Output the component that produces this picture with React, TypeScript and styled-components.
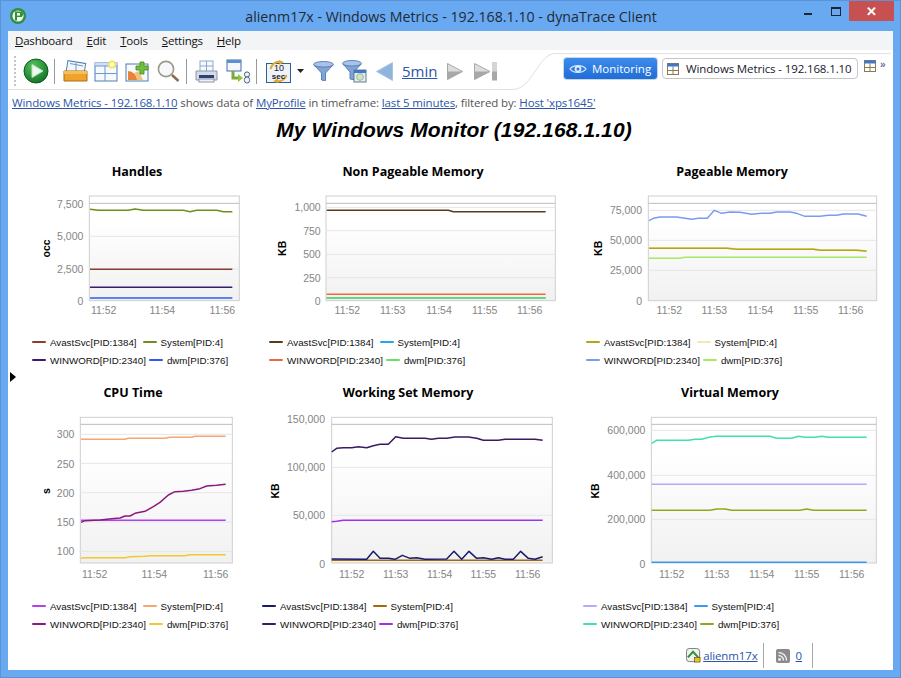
import React from "react";
import styled, { createGlobalStyle } from "styled-components";

const GlobalStyle = createGlobalStyle`
  html, body {
    margin: 0;
    padding: 0;
    background: #69a9f2;
  }
`;

const UI_FONT = `"Open Sans", "Noto Sans", sans-serif`;
const CHART_FONT = `"Liberation Sans", Arial, sans-serif`;

const Window = styled.div`
  position: relative;
  box-sizing: border-box;
  width: 901px;
  height: 678px;
  padding: 0 7px 7px;
  display: flex;
  flex-direction: column;
  background: #69a9f2;
  border: 1px solid #5b93d6;
  overflow: hidden;
  font-family: ${UI_FONT};
`;

const TitleBar = styled.div`
  height: 30px;
  flex: none;
  display: flex;
  align-items: center;
  margin: 0 -7px;
  padding-left: 8px;
`;

const AppIcon = styled.svg`
  flex: none;
  width: 18px;
  height: 18px;
  margin-top: -1px;
`;

const WindowTitle = styled.div`
  flex: 1;
  text-align: center;
  font-size: 14.2px;
  color: #202a36;
  margin-right: 25px;
`;

const WindowButtons = styled.div`
  position: absolute;
  top: 0;
  right: 6px;
  display: flex;
  align-items: flex-start;
`;

const MinButton = styled.div`
  width: 8px;
  height: 2px;
  background: #1d2630;
  margin: 12px 19px 0 0;
`;

const MaxButton = styled.div`
  box-sizing: border-box;
  width: 10px;
  height: 9px;
  border: 1px solid #1d2630;
  border-top-width: 2px;
  margin: 6px 8px 0 0;
`;

const CloseButton = styled.div`
  width: 45px;
  height: 20px;
  background: #c75050;
  color: #fff;
  display: flex;
  align-items: center;
  justify-content: center;
  font: bold 13px ${CHART_FONT};
`;

const Client = styled.div`
  flex: 1;
  display: flex;
  flex-direction: column;
  background: #fff;
  min-height: 0;
`;

const MenuBar = styled.div`
  height: 19px;
  flex: none;
  display: flex;
  align-items: center;
  gap: 14px;
  padding-left: 7px;
  background: #f3f4f6;
  font-size: 11.5px;
  letter-spacing: -0.2px;
  color: #111;
`;

const ToolRow = styled.div`
  height: 39px;
  flex: none;
  display: flex;
  border-top: 1px solid #fff;
`;

const ToolsLeft = styled.div`
  width: 500px;
  flex: none;
  box-sizing: border-box;
  display: flex;
  align-items: center;
  border-bottom: 1px solid #e3e3e3;
  padding: 2px 0 0 6px;
`;

const Grip = styled.div`
  width: 2px;
  height: 30px;
  border-left: 2px dotted #c4c4c4;
  margin-right: 7px;
  box-sizing: border-box;
`;

const ToolIcon = styled.svg<{ $gap?: number }>`
  flex: none;
  margin-right: ${(p) => p.$gap ?? 0}px;
`;

const ToolSep = styled.div<{ $left: number; $right: number }>`
  width: 1px;
  height: 25px;
  flex: none;
  background: #9a9a9a;
  margin: 0 ${(p) => p.$right}px 0 ${(p) => p.$left}px;
`;

const Range = styled.a`
  font-size: 15px;
  color: #2a55a8;
  text-decoration: underline;
  margin-right: 10px;
`;

const Curve = styled.svg`
  flex: none;
  width: 50px;
  height: 39px;
`;

const ToolsRight = styled.div`
  flex: 1;
  display: flex;
  align-items: flex-start;
  box-sizing: border-box;
  border-top: 1px solid #e3e3e3;
  margin: 2px 2px 0 0;
  padding: 4px 0 0 6px;
`;

const PerspectiveButton = styled.div`
  box-sizing: border-box;
  width: 93px;
  height: 21px;
  display: flex;
  align-items: center;
  gap: 5px;
  padding-left: 5px;
  border-radius: 3px;
  background: linear-gradient(#3d8bec, #1f6dd6);
  box-shadow: 0 0 0 1px #c9d6e6;
  color: #fff;
  font-size: 11.5px;
  white-space: nowrap;
`;

const DashTab = styled.div`
  box-sizing: border-box;
  width: 196px;
  height: 21px;
  margin-left: 5px;
  display: flex;
  align-items: center;
  gap: 7px;
  padding-left: 4px;
  border: 1px solid #c6c6c6;
  border-radius: 4px;
  color: #17202c;
  font-size: 11.5px;
  letter-spacing: -0.13px;
  white-space: nowrap;
`;

const MoreIcons = styled.div`
  display: flex;
  align-items: flex-start;
  gap: 4px;
  margin: 2px 0 0 6px;
`;

const Chevrons = styled.span`
  color: #6a6aa8;
  font: bold 10px/9px ${CHART_FONT};
`;

const TableIcon = styled.svg`
  flex: none;
`;

const Crumbs = styled.div`
  flex: none;
  height: 20px;
  padding: 4px 0 0 4px;
  box-sizing: border-box;
  font-size: 11.5px;
  letter-spacing: -0.13px;
  line-height: 17px;
  color: #555;
  white-space: nowrap;
`;

const Crumb = styled.a`
  color: #2a55a8;
  text-decoration: underline;
`;

const Heading = styled.h1`
  margin: 0;
  height: 52px;
  flex: none;
  box-sizing: border-box;
  padding: 8px 0 0 7px;
  text-align: center;
  font: italic bold 21px/24px ${CHART_FONT};
  letter-spacing: 0.1px;
  color: #000;
`;

const ChartGrid = styled.div`
  flex: none;
  display: grid;
  grid-template-columns: 258px 296px 331px;
  row-gap: 14px;
`;

const Cell = styled.section`
  display: flex;
  flex-direction: column;
  min-width: 0;
`;

const ChartTitle = styled.div<{ $shift: number }>`
  height: 19px;
  line-height: 19px;
  text-align: center;
  font-size: 12.5px;
  font-weight: 700;
  color: #000;
  padding-left: ${(p) => Math.max(0, p.$shift * 2)}px;
  padding-right: ${(p) => Math.max(0, -p.$shift * 2)}px;
`;

const PlotSvg = styled.svg`
  display: block;
`;

const AxisText = styled.text`
  font: 10.5px ${CHART_FONT};
  fill: #858585;
  dominant-baseline: central;
`;

const UnitText = styled.text`
  font: bold 10.5px ${CHART_FONT};
  fill: #000;
  text-anchor: middle;
  dominant-baseline: central;
`;

const Legend = styled.div<{ $left: number }>`
  display: flex;
  flex-direction: column;
  margin-left: ${(p) => p.$left}px;
`;

const LegendRow = styled.div<{ $gap: number }>`
  display: flex;
  align-items: center;
  height: 18px;
  gap: ${(p) => p.$gap}px;
`;

const LegendItem = styled.div`
  display: flex;
  align-items: center;
  gap: 4px;
  font: 9.75px ${CHART_FONT};
  color: #111;
  white-space: nowrap;
`;

const Swatch = styled.span<{ $color: string }>`
  width: 14px;
  height: 2px;
  border-radius: 1px;
  background: ${(p) => p.$color};
`;

const StatusBar = styled.div`
  flex: 1;
  display: flex;
  justify-content: flex-end;
  align-items: flex-start;
  padding: 10px 80px 0 0;
  font-size: 11.5px;
  letter-spacing: -0.13px;
`;

const StatusLink = styled.a`
  color: #2a55a8;
  text-decoration: underline;
  line-height: 19px;
`;

const StatusCell = styled.div<{ $lead: number; $pad: number }>`
  display: flex;
  align-items: center;
  height: 25px;
  gap: 6px;
  padding-right: ${(p) => p.$pad}px;
  margin-left: ${(p) => p.$lead}px;
  border-right: 1px solid #a8a8a8;
`;

const UserIcon = styled.svg`
  flex: none;
  margin: 5px 2px 0 0;
`;

const FeedIcon = styled.svg`
  flex: none;
  margin-left: 6px;
`;

const SashArrow = styled.div`
  position: absolute;
  left: 9px;
  top: 371px;
  width: 0;
  height: 0;
  border-left: 6px solid #000;
  border-top: 5px solid transparent;
  border-bottom: 5px solid transparent;
`;

type Series = { name: string; color: string; points: number[][] };

type ChartDef = {
  title: string;
  shift: number;
  column: number;
  row: number;
  origin: [number, number];
  plot: [number, number, number, number];
  topLine: number;
  yLabels: [string, number][];
  labelRight: number;
  grid: number[];
  xLabels: [string, number][];
  xLabelY: number;
  unit: string;
  unitPos: [number, number];
  legendLeft: number;
  series: Series[];
};

const COLUMNS = [
  { x: 8, w: 258 },
  { x: 266, w: 296 },
  { x: 562, w: 331 },
];
const ROWS = [
  { y: 181, h: 152 },
  { y: 402, h: 195 },
];

const flat = (x0: number, x1: number, y: number) => [
  [x0, y],
  [x1, y],
];

// point lists are measured on a 3x crop of the page, origin says where the crop starts
const CHARTS: ChartDef[] = [
  {
    title: "Handles",
    shift: 0,
    column: 0,
    row: 0,
    origin: [0, 160],
    plot: [268, 108, 718, 422],
    topLine: 130,
    yLabels: [
      ["7,500", 132],
      ["5,000", 229],
      ["2,500", 327],
      ["0", 424],
    ],
    labelRight: 250,
    grid: [229, 327],
    xLabels: [
      ["11:52", 311],
      ["11:54", 487],
      ["11:56", 667],
    ],
    xLabelY: 451,
    unit: "occ",
    unitPos: [138, 265],
    legendLeft: 24,
    series: [
      { name: "AvastSvc[PID:1384]", color: "#8a3f2c", points: flat(270, 697, 328) },
      {
        name: "System[PID:4]",
        color: "#6f8f1c",
        points: [[270, 148], [295, 151], [385, 151], [405, 147], [430, 151], [550, 151], [570, 155], [590, 151], [650, 151], [670, 155], [697, 155]],
      },
      { name: "WINWORD[PID:2340]", color: "#3c1a6e", points: flat(270, 697, 382) },
      { name: "dwm[PID:376]", color: "#2a5cf0", points: flat(270, 697, 414) },
    ],
  },
  {
    title: "Non Pageable Memory",
    shift: -1,
    column: 1,
    row: 0,
    origin: [260, 160],
    plot: [198, 108, 886, 422],
    topLine: 130,
    yLabels: [
      ["1,000", 142],
      ["750", 213],
      ["500", 283],
      ["250", 353],
      ["0", 423],
    ],
    labelRight: 182,
    grid: [142, 212, 283, 353],
    xLabels: [
      ["11:52", 262],
      ["11:53", 398],
      ["11:54", 537],
      ["11:55", 674],
      ["11:56", 809],
    ],
    xLabelY: 451,
    unit: "KB",
    unitPos: [66, 265],
    legendLeft: 3,
    series: [
      { name: "AvastSvc[PID:1384]", color: "#5a3c1c", points: [[200, 151], [565, 151], [580, 155], [857, 155]] },
      { name: "System[PID:4]", color: "#22a8e8", points: flat(200, 857, 414) },
      { name: "WINWORD[PID:2340]", color: "#f0683a", points: flat(200, 857, 403) },
      { name: "dwm[PID:376]", color: "#66e066", points: flat(200, 857, 414) },
    ],
  },
  {
    title: "Pageable Memory",
    shift: 4.5,
    column: 2,
    row: 0,
    origin: [570, 160],
    plot: [235, 108, 920, 422],
    topLine: 130,
    yLabels: [
      ["75,000", 151],
      ["50,000", 241],
      ["25,000", 331],
      ["0", 423],
    ],
    labelRight: 216,
    grid: [151, 241, 331],
    xLabels: [
      ["11:52", 298],
      ["11:53", 433],
      ["11:54", 571],
      ["11:55", 707],
      ["11:56", 842],
    ],
    xLabelY: 451,
    unit: "KB",
    unitPos: [85, 265],
    legendLeft: 24,
    series: [
      { name: "System[PID:4]", color: "#f5e6b0", points: [[237, 263], [470, 263], [500, 266], [730, 266], [750, 269], [860, 269], [890, 272]] },
      { name: "AvastSvc[PID:1384]", color: "#b0a810", points: [[237, 265], [470, 265], [500, 268], [730, 268], [750, 271], [860, 271], [890, 274]] },
      {
        name: "WINWORD[PID:2340]",
        color: "#7a9cf0",
        points: [[237, 182], [250, 175], [270, 171], [320, 171], [365, 178], [385, 175], [412, 175], [433, 151], [455, 160], [480, 156], [510, 157], [545, 163], [575, 160], [600, 160], [620, 156], [660, 156], [680, 160], [705, 169], [750, 169], [775, 166], [800, 166], [820, 162], [865, 162], [890, 169]],
      },
      { name: "dwm[PID:376]", color: "#a8e860", points: [[237, 295], [330, 295], [345, 292], [890, 292]] },
    ],
  },
  {
    title: "CPU Time",
    shift: -4,
    column: 0,
    row: 1,
    origin: [0, 380],
    plot: [241, 112, 697, 549],
    topLine: 133,
    yLabels: [
      ["300", 163],
      ["250", 253],
      ["200", 339],
      ["150", 426],
      ["100", 514],
    ],
    labelRight: 223,
    grid: [163, 250, 338, 426, 514],
    xLabels: [
      ["11:52", 284],
      ["11:54", 463],
      ["11:56", 647],
    ],
    xLabelY: 581,
    unit: "s",
    unitPos: [138, 333],
    legendLeft: 24,
    series: [
      { name: "AvastSvc[PID:1384]", color: "#b040f0", points: flat(243, 677, 421) },
      { name: "System[PID:4]", color: "#f5a673", points: [[243, 178], [375, 178], [385, 175], [495, 175], [510, 172], [575, 172], [585, 169], [677, 169]] },
      {
        name: "WINWORD[PID:2340]",
        color: "#8b1a80",
        points: [[243, 427], [255, 422], [300, 420], [335, 416], [360, 414], [375, 408], [390, 408], [405, 400], [435, 394], [460, 380], [480, 367], [505, 345], [525, 335], [550, 334], [575, 331], [600, 326], [620, 318], [650, 316], [677, 313]],
      },
      { name: "dwm[PID:376]", color: "#f0c830", points: [[243, 535], [255, 533], [375, 533], [390, 530], [435, 529], [450, 527], [555, 527], [570, 524], [677, 524]] },
    ],
  },
  {
    title: "Working Set Memory",
    shift: -6,
    column: 1,
    row: 1,
    origin: [260, 380],
    plot: [215, 112, 877, 549],
    topLine: 133,
    yLabels: [
      ["150,000", 118],
      ["100,000", 262],
      ["50,000", 406],
      ["0", 552],
    ],
    labelRight: 195,
    grid: [262, 406],
    xLabels: [
      ["11:52", 275],
      ["11:53", 407],
      ["11:54", 539],
      ["11:55", 670],
      ["11:56", 803],
    ],
    xLabelY: 583,
    unit: "KB",
    unitPos: [46, 333],
    legendLeft: -4,
    series: [
      { name: "System[PID:4]", color: "#a06a10", points: flat(215, 848, 541) },
      {
        name: "AvastSvc[PID:1384]",
        color: "#1a1a70",
        points: [[215, 537], [320, 538], [340, 514], [360, 535], [385, 535], [405, 538], [427, 526], [450, 535], [470, 533], [495, 538], [560, 537], [582, 514], [605, 538], [627, 514], [650, 535], [670, 533], [695, 538], [715, 533], [735, 538], [760, 538], [782, 514], [805, 535], [825, 538], [848, 530]],
      },
      {
        name: "WINWORD[PID:2340]",
        color: "#3a1a60",
        points: [[215, 216], [230, 205], [250, 203], [275, 203], [295, 200], [320, 203], [340, 197], [360, 193], [385, 193], [407, 170], [430, 175], [495, 175], [515, 178], [535, 175], [560, 175], [585, 171], [625, 171], [650, 175], [670, 181], [715, 181], [735, 178], [825, 178], [848, 181]],
      },
      { name: "dwm[PID:376]", color: "#a030f0", points: [[215, 425], [230, 424], [250, 421], [848, 421]] },
    ],
  },
  {
    title: "Virtual Memory",
    shift: 2.5,
    column: 2,
    row: 1,
    origin: [570, 380],
    plot: [244, 112, 919, 549],
    topLine: 133,
    yLabels: [
      ["600,000", 151],
      ["400,000", 286],
      ["200,000", 418],
      ["0", 552],
    ],
    labelRight: 226,
    grid: [151, 286, 418],
    xLabels: [
      ["11:52", 305],
      ["11:53", 440],
      ["11:54", 575],
      ["11:55", 710],
      ["11:56", 845],
    ],
    xLabelY: 583,
    unit: "KB",
    unitPos: [75, 333],
    legendLeft: 21,
    series: [
      { name: "AvastSvc[PID:1384]", color: "#b8a8f8", points: flat(245, 890, 313) },
      { name: "System[PID:4]", color: "#3a9af0", points: flat(245, 890, 547) },
      {
        name: "WINWORD[PID:2340]",
        color: "#40e0b0",
        points: [[245, 190], [260, 181], [355, 181], [375, 178], [395, 178], [420, 171], [440, 169], [600, 169], [620, 175], [665, 175], [685, 169], [705, 172], [735, 172], [755, 169], [775, 172], [890, 172]],
      },
      { name: "dwm[PID:376]", color: "#90a820", points: [[245, 391], [420, 391], [440, 387], [465, 387], [485, 391], [690, 391], [710, 387], [730, 391], [890, 391]] },
    ],
  },
];

const LEGEND_ROWS = [
  { gap: 6, names: ["AvastSvc[PID:1384]", "System[PID:4]"] },
  { gap: 3, names: ["WINWORD[PID:2340]", "dwm[PID:376]"] },
];

const Chart: React.FC<{ def: ChartDef }> = ({ def }) => {
  const col = COLUMNS[def.column];
  const row = ROWS[def.row];
  const [ox, oy] = def.origin;
  const px = (x: number) => ox + x / 3;
  const py = (y: number) => oy + y / 3;
  const [l, t, r, b] = def.plot;
  const gradId = `plot-${def.column}-${def.row}`;

  return (
    <Cell>
      <ChartTitle $shift={def.shift}>{def.title}</ChartTitle>
      <PlotSvg
        width={col.w}
        height={row.h}
        viewBox={`${col.x} ${row.y} ${col.w} ${row.h}`}
      >
        <defs>
          <linearGradient id={gradId} x1="0" y1="0" x2="0" y2="1">
            <stop offset="0.25" stopColor="#ffffff" />
            <stop offset="1" stopColor="#f1f1f1" />
          </linearGradient>
        </defs>
        <rect
          x={px(l)}
          y={py(t)}
          width={px(r) - px(l)}
          height={py(b) - py(t)}
          fill={`url(#${gradId})`}
          stroke="#cfcfcf"
        />
        <line x1={px(l)} x2={px(r)} y1={py(def.topLine)} y2={py(def.topLine)} stroke="#bdbdbd" />
        {def.grid.map((y) => (
          <line key={y} x1={px(l)} x2={px(r)} y1={py(y)} y2={py(y)} stroke="#e6e6e6" />
        ))}
        {def.yLabels.map(([text, y]) => (
          <AxisText key={text} x={px(def.labelRight)} y={py(y)} textAnchor="end">
            {text}
          </AxisText>
        ))}
        {def.xLabels.map(([text, x]) => (
          <AxisText key={text} x={px(x)} y={py(def.xLabelY)} textAnchor="middle">
            {text}
          </AxisText>
        ))}
        <UnitText
          transform={`translate(${px(def.unitPos[0])} ${py(def.unitPos[1])}) rotate(-90)`}
        >
          {def.unit}
        </UnitText>
        {def.series.map((s) => (
          <polyline
            key={s.name}
            fill="none"
            stroke={s.color}
            strokeWidth={1.5}
            strokeLinejoin="round"
            points={s.points.map(([x, y]) => `${px(x)},${py(y)}`).join(" ")}
          />
        ))}
      </PlotSvg>
      <Legend $left={def.legendLeft}>
        {LEGEND_ROWS.map((legendRow) => (
          <LegendRow key={legendRow.names[0]} $gap={legendRow.gap}>
            {legendRow.names.map((name) => (
              <LegendItem key={name}>
                <Swatch $color={def.series.find((s) => s.name === name)!.color} />
                {name}
              </LegendItem>
            ))}
          </LegendRow>
        ))}
      </Legend>
    </Cell>
  );
};

const TableGlyph: React.FC = () => (
  <TableIcon width="12" height="12" viewBox="0 0 12 12">
    <rect x="0.5" y="0.5" width="11" height="11" fill="#fff" stroke="#8a7a50" />
    <rect x="0.5" y="0.5" width="11" height="3" fill="#3f78c8" />
    <path d="M6 3.5V11.5M0.5 7.5H11.5" stroke="#8a7a50" />
  </TableIcon>
);

export default function App() {
  return (
    <Window>
      <GlobalStyle />
      <TitleBar>
        <AppIcon viewBox="0 0 18 18">
          <circle cx="9" cy="9" r="8" fill="#2f8f3a" />
          <circle cx="9" cy="9" r="5.6" fill="#eef6ee" />
          <path d="M6 4.5h5.2a2.6 2.6 0 0 1 0 5.6H8v3.4H6z" fill="#2f8f3a" />
          <rect x="8" y="6" width="3" height="2.6" fill="#eef6ee" />
        </AppIcon>
        <WindowTitle>alienm17x - Windows Metrics - 192.168.1.10 - dynaTrace Client</WindowTitle>
      </TitleBar>
      <WindowButtons>
        <MinButton />
        <MaxButton />
        <CloseButton>✕</CloseButton>
      </WindowButtons>
      <Client>
        <MenuBar>
          <span><u>D</u>ashboard</span>
          <span><u>E</u>dit</span>
          <span><u>T</u>ools</span>
          <span><u>S</u>ettings</span>
          <span><u>H</u>elp</span>
        </MenuBar>
        <ToolRow>
          <ToolsLeft>
            <Grip />
            <ToolIcon width="26" height="26" viewBox="0 0 26 26">
              <defs>
                <radialGradient id="playFill" cx="0.4" cy="0.3" r="0.8">
                  <stop offset="0" stopColor="#57c45c" />
                  <stop offset="1" stopColor="#0b6b22" />
                </radialGradient>
              </defs>
              <circle cx="13" cy="13" r="12" fill="url(#playFill)" stroke="#0f5a22" />
              <path d="M9 6.5 20 13 9 19.5z" fill="#eef8ee" stroke="#bfe3bf" />
            </ToolIcon>
            <ToolSep $left={5} $right={8} />
            <ToolIcon width="25" height="22" viewBox="0 0 25 22" $gap={6}>
              <rect x="4" y="2" width="18" height="11" fill="#f3f7fc" stroke="#4f7fb5" transform="rotate(9 13 7)" />
              <path d="M7 3.5 20 6M13 3v8" stroke="#6f97c7" fill="none" />
              <path d="M1 11h23v10H1z" fill="#eda32c" stroke="#a96f12" />
              <path d="M1 11h23v3H1z" fill="#f6bf58" />
            </ToolIcon>
            <ToolIcon width="25" height="22" viewBox="0 0 25 22" $gap={6}>
              <rect x="1" y="3" width="22" height="18" fill="#f6f9fd" stroke="#4f7fb5" />
              <rect x="1" y="3" width="22" height="3" fill="#cfe0f4" />
              <path d="M1 6H23M1 13.5H23M11 6V21" stroke="#6f97c7" />
              <circle cx="18" cy="4.5" r="4" fill="#f4e65a" />
              <circle cx="18" cy="4.5" r="2.2" fill="#fffbd0" />
            </ToolIcon>
            <ToolIcon width="25" height="22" viewBox="0 0 25 22" $gap={7}>
              <rect x="1" y="4" width="22" height="17" fill="#f6f9fd" stroke="#4f7fb5" />
              <path d="M3 20V11A9 9 0 0 1 12 20z" fill="#e8843a" />
              <path d="M12 20A9 9 0 0 0 9 13l5-2 4 9z" fill="#f3c27a" />
              <path d="M15 2h4v4h4v4h-4v4h-4v-4h-4V6h4z" fill="#6fbf3a" stroke="#3e8a1e" strokeWidth="0.8" />
            </ToolIcon>
            <ToolIcon width="23" height="22" viewBox="0 0 23 22">
              <circle cx="9" cy="9" r="7.6" fill="#f7f8fa" stroke="#9a9a8a" strokeWidth="1.6" />
              <path d="M15 15 21.5 21" stroke="#8a6a4a" strokeWidth="2.4" />
            </ToolIcon>
            <ToolSep $left={6} $right={8} />
            <ToolIcon width="23" height="23" viewBox="0 0 23 23" $gap={8}>
              <rect x="5" y="1" width="13" height="11" fill="#f6f9fd" stroke="#8fa9cc" />
              <path d="M11.5 1v11M5 6h13" stroke="#8fa9cc" />
              <path d="M1 11h21v9H1z" fill="#d5dbe4" stroke="#8c97a8" />
              <rect x="4" y="15" width="15" height="3" fill="#2f3f78" />
              <rect x="4" y="19" width="15" height="3" fill="#eef1f6" stroke="#8c97a8" />
            </ToolIcon>
            <ToolIcon width="25" height="25" viewBox="0 0 25 25" $gap={5}>
              <rect x="1" y="1" width="14" height="11" fill="#f4f8fc" stroke="#3f6fa8" />
              <rect x="1" y="1" width="14" height="3" fill="#5a8fd0" />
              <path d="M7 12v7h6" fill="none" stroke="#7fa83a" strokeWidth="3" />
              <path d="M12 15v8l5-4z" fill="#8cc63f" />
              <circle cx="21" cy="15.5" r="2.6" fill="#eef3f8" stroke="#4a5f7a" />
              <rect x="18.4" y="18" width="5.2" height="6" rx="2.4" fill="#eef3f8" stroke="#4a5f7a" />
            </ToolIcon>
            <ToolSep $left={0} $right={9} />
            <ToolIcon width="25" height="23" viewBox="0 0 25 23" $gap={6}>
              <rect x="0.5" y="3.5" width="24" height="19" fill="#eef3f9" stroke="#2f5f98" />
              <path d="M4.5 9C5.5 4 10 1.5 14 1.5" fill="none" stroke="#e0a92e" strokeWidth="2" />
              <path d="M13 0 18 2 13.5 5z" fill="#e0a92e" />
              <path d="M20.5 15C19.5 19.5 15 21.5 11 21.5" fill="none" stroke="#e0a92e" strokeWidth="2" />
              <path d="M12 18.5 7 21 12 23z" fill="#e0a92e" />
              <text x="13" y="11" fontSize="9" textAnchor="middle" fontFamily={CHART_FONT} fill="#222">10</text>
              <text x="12.5" y="18.5" fontSize="8" fontWeight="bold" textAnchor="middle" fontFamily={CHART_FONT} fill="#222">sec</text>
            </ToolIcon>
            <ToolIcon width="7" height="4" viewBox="0 0 7 4" $gap={9}>
              <path d="M0 0h7L3.5 4z" fill="#222" />
            </ToolIcon>
            <ToolIcon width="21" height="20" viewBox="0 0 21 20" $gap={8}>
              <ellipse cx="10.5" cy="3.5" rx="10" ry="3" fill="#a9c3e8" stroke="#5f82b5" />
              <path d="M1 4 8.5 12v7l4 .8V12L20 4a10 3 0 0 1-19 0z" fill="#7ea4d8" stroke="#5f82b5" />
            </ToolIcon>
            <ToolIcon width="25" height="23" viewBox="0 0 25 23" $gap={9}>
              <ellipse cx="10" cy="3.5" rx="9.5" ry="3" fill="#a9c3e8" stroke="#5f82b5" />
              <path d="M1 4 8 12v7l4 .8V12L19 4a9.5 3 0 0 1-18 0z" fill="#7ea4d8" stroke="#5f82b5" />
              <rect x="12" y="10" width="12" height="12" fill="#e6eef2" stroke="#5f7f8a" />
              <rect x="12" y="10" width="12" height="3" fill="#3f78c8" />
              <circle cx="18" cy="17" r="3.4" fill="#cfe4c4" stroke="#9ab8a0" />
            </ToolIcon>
            <ToolIcon width="17" height="19" viewBox="0 0 17 19" $gap={9}>
              <path d="M16.5 0.5V18.5L0.5 9.5z" fill="#8fb5dc" stroke="#a8c6e4" />
            </ToolIcon>
            <Range>5min</Range>
            <ToolIcon width="16" height="17" viewBox="0 0 16 17" $gap={11}>
              <path d="M0.5 0.5 15.5 8.5 0.5 16.5z" fill="#ddd" stroke="#a8a8a8" />
              <path d="M0.5 8.5H15.5L0.5 16.5z" fill="#a8a8a8" />
            </ToolIcon>
            <ToolIcon width="23" height="19" viewBox="0 0 23 19">
              <path d="M0.5 1.5 16 9.5 0.5 17.5z" fill="#ddd" stroke="#a8a8a8" />
              <path d="M0.5 9.5H16L0.5 17.5z" fill="#a8a8a8" />
              <rect x="18" y="0.5" width="5" height="18" fill="#a8a8a8" />
              <rect x="18" y="0.5" width="5" height="9" fill="#d4d4d4" />
            </ToolIcon>
          </ToolsLeft>
          <Curve viewBox="0 0 50 39">
            <path d="M0 38.5H3C14 38.5 18 33 26 22S38 1.5 50 2.5" fill="none" stroke="#e0e0e0" />
          </Curve>
          <ToolsRight>
            <PerspectiveButton>
              <svg width="18" height="12" viewBox="0 0 18 12">
                <path d="M1 6C4 1.5 14 1.5 17 6 14 10.5 4 10.5 1 6z" fill="none" stroke="#d8e8fb" strokeWidth="1.3" />
                <circle cx="9" cy="6" r="3.4" fill="#d8e8fb" />
                <circle cx="9" cy="6" r="1.5" fill="#2a74da" />
              </svg>
              Monitoring
            </PerspectiveButton>
            <DashTab>
              <TableGlyph />
              Windows Metrics - 192.168.1.10
            </DashTab>
            <MoreIcons>
              <TableGlyph />
              <Chevrons>»</Chevrons>
            </MoreIcons>
          </ToolsRight>
        </ToolRow>
        <Crumbs>
          <Crumb>Windows Metrics - 192.168.1.10</Crumb> shows data of <Crumb>MyProfile</Crumb> in timeframe:{" "}
          <Crumb>last 5 minutes</Crumb>, filtered by: <Crumb>Host 'xps1645'</Crumb>
        </Crumbs>
        <Heading>My Windows Monitor (192.168.1.10)</Heading>
        <ChartGrid>
          {CHARTS.map((def) => (
            <Chart key={def.title} def={def} />
          ))}
        </ChartGrid>
        <StatusBar>
          <UserIcon width="15" height="15" viewBox="0 0 16 16">
            <rect x="0.5" y="0.5" width="14" height="14" rx="3" fill="#f1f1f1" stroke="#777" />
            <path d="M2 10 7.5 4 13 10" fill="none" stroke="#2f8f3a" strokeWidth="2" />
            <rect x="9" y="10" width="6" height="5" fill="#f1c40f" stroke="#333" strokeWidth="0.6" />
          </UserIcon>
          <StatusCell $lead={0} $pad={5}>
            <StatusLink>alienm17x</StatusLink>
          </StatusCell>
          <StatusCell $lead={6} $pad={10}>
            <FeedIcon width="14" height="14" viewBox="0 0 14 14">
              <rect width="14" height="14" rx="2" fill="#8a8a8a" />
              <circle cx="3.5" cy="10.5" r="1.4" fill="#eee" />
              <path d="M2.5 6.5a5 5 0 0 1 5 5M2.5 3.5a8 8 0 0 1 8 8" fill="none" stroke="#eee" strokeWidth="1.5" />
            </FeedIcon>
            <StatusLink>0</StatusLink>
          </StatusCell>
        </StatusBar>
      </Client>
      <SashArrow />
    </Window>
  );
}
